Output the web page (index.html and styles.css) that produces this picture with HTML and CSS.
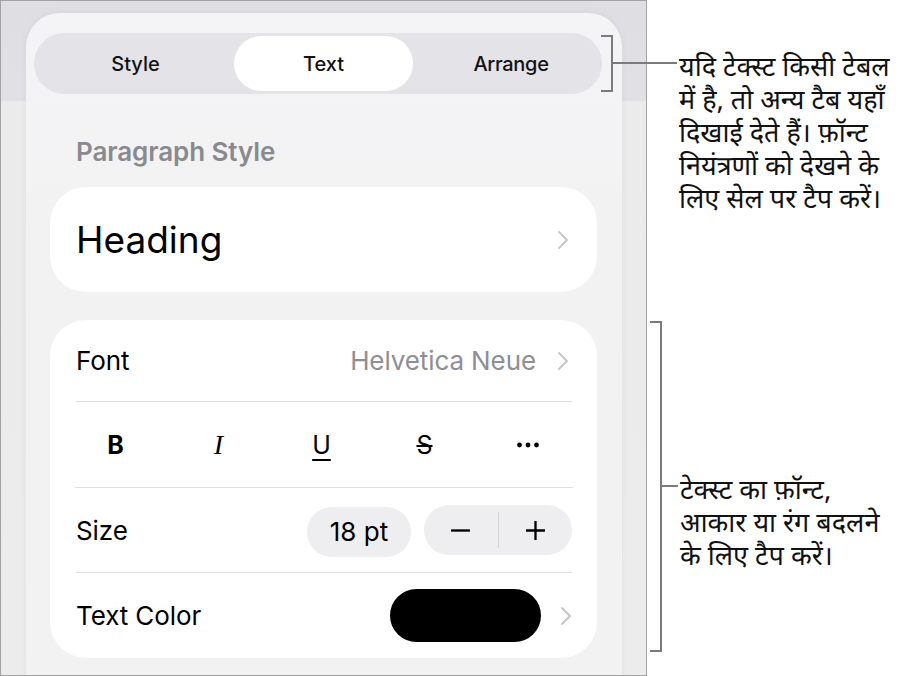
FILE: index.html
```html
<!DOCTYPE html>
<html lang="hi">
<head>
<meta charset="utf-8">
<title>Text format panel</title>
<link rel="stylesheet" href="styles.css">
</head>
<body>
<div class="page">
  <div class="device">
    <div class="panel">
      <div class="segmented">
        <div class="seg">Style</div>
        <div class="seg seg-active">Text</div>
        <div class="seg seg-last">Arrange</div>
      </div>
      <div class="section-label">Paragraph Style</div>
      <div class="card card-heading">
        <span class="heading-text">Heading</span>
        <svg class="chev" viewBox="0 0 12 20"><path d="M2 2 L10 10 L2 18"/></svg>
      </div>
      <div class="card card-font">
        <div class="row row-font">
          <span class="row-label">Font</span>
          <span class="row-value">Helvetica Neue</span>
          <svg class="chev" viewBox="0 0 12 20"><path d="M2 2 L10 10 L2 18"/></svg>
        </div>
        <div class="row row-styles">
          <span class="st st-b">B</span>
          <span class="st st-i">I</span>
          <span class="st st-u">U</span>
          <span class="st st-s">S</span>
          <span class="st st-more"><svg viewBox="0 0 24 6"><circle cx="3.5" cy="3" r="2.4"/><circle cx="12" cy="3" r="2.4"/><circle cx="20.5" cy="3" r="2.4"/></svg></span>
        </div>
        <div class="row row-size">
          <span class="row-label">Size</span>
          <span class="pill-size">18 pt</span>
          <span class="stepper">
            <span class="step"><svg viewBox="0 0 20 20"><path d="M1 10 H19"/></svg></span>
            <span class="step-div"></span>
            <span class="step"><svg viewBox="0 0 20 20"><path d="M1 10 H19 M10 1 V19"/></svg></span>
          </span>
        </div>
        <div class="row row-color">
          <span class="row-label">Text Color</span>
          <span class="swatch"></span>
          <svg class="chev" viewBox="0 0 12 20"><path d="M2 2 L10 10 L2 18"/></svg>
        </div>
      </div>
    </div>
  </div>

  <div class="callout callout-tabs">
    <div class="bracket bracket-tabs"></div>
    <div class="leader leader-tabs"></div>
    <p class="note note-tabs">यदि टेक्स्ट किसी टेबल<br>में है, तो अन्य टैब यहाँ<br>दिखाई देते हैं। फ़ॉन्ट<br>नियंत्रणों को देखने के<br>लिए सेल पर टैप करें।</p>
  </div>

  <div class="callout callout-font">
    <div class="bracket bracket-font"></div>
    <div class="leader leader-font"></div>
    <p class="note note-font">टेक्स्ट का फ़ॉन्ट,<br>आकार या रंग बदलने<br>के लिए टैप करें।</p>
  </div>
</div>
</body>
</html>
```

FILE: styles.css
```css
* { box-sizing: border-box; }
html, body { margin: 0; padding: 0; background: #ffffff; }
body { width: 904px; height: 676px; overflow: hidden; font-family: "Inter", "Liberation Sans", sans-serif; color: #000; }

.page { position: relative; width: 904px; height: 676px; }

.device {
  width: 647px;
  height: 676px;
  border: 1px solid #a2a2a2;
  background: linear-gradient(to bottom, #dfdfe3 0, #e1e1e5 100px, #ebebec 100px, #ececed 100%);
  padding: 12px 0 0 25px;
  overflow: hidden;
}

.panel {
  width: 596px;
  height: 700px;
  border-radius: 34px 34px 0 0;
  background: linear-gradient(to bottom, #f4f4f6 0, #f2f2f3 200px, #f2f2f2 100%);
  box-shadow: 0 0 8px rgba(0,0,0,0.05);
  padding: 20px 24px 0 8px;
}

.segmented {
  width: 568px;
  height: 61px;
  border-radius: 31px;
  background: #e3e3e8;
  padding: 3px;
  display: grid;
  grid-template-columns: 197px 179px 1fr;
}
.seg {
  display: flex;
  align-items: center;
  justify-content: center;
  font-size: 20px;
  font-weight: 500;
  color: #111;
}
.seg-last { padding-left: 10px; letter-spacing: -0.3px; }
.seg-active {
  background: #ffffff;
  border-radius: 28px;
}

.section-label {
  margin: 43px 0 0 42px;
  font-size: 26px;
  line-height: 30px;
  font-weight: 600;
  color: #8a8a8e;
  letter-spacing: -0.1px;
}

.card {
  margin-left: 16px;
  width: 547px;
  background: #ffffff;
  border-radius: 36px;
}

.card-heading {
  margin-top: 20px;
  height: 105px;
  display: flex;
  align-items: center;
  padding: 0 28px 0 26px;
}
.heading-text {
  flex: 1;
  font-size: 37px;
  color: #000;
}

.chev { width: 12px; height: 20px; flex: none; }
.chev path { fill: none; stroke: #c4c4c7; stroke-width: 1.8; stroke-linecap: round; stroke-linejoin: round; }

.card-font {
  margin-top: 28px;
  padding: 0 25px 0 26px;
}

.row {
  display: flex;
  align-items: center;
  border-bottom: 1px solid #dedee0;
}
.row:last-child { border-bottom: none; }

.row-label { flex: 1; font-size: 26px; color: #000; letter-spacing: -0.1px; }
.row-value { font-size: 26px; color: #8e8e93; margin-right: 21px; letter-spacing: -0.1px; }

.row-font { height: 82px; padding-right: 3px; }

.row-styles {
  height: 86px;
  margin-left: -12px;
  margin-right: -10px;
  display: grid;
  grid-template-columns: repeat(5, 103px);
  align-items: center;
  border-bottom: 1px solid #dedee0;
  border-image: linear-gradient(to right, transparent 12px, #dedee0 12px, #dedee0 calc(100% - 10px), transparent calc(100% - 10px)) 1;
}
.st { text-align: center; font-size: 25px; color: #000; line-height: 28px; }
.st-b { font-weight: 700; }
.st-i { font-family: "Liberation Serif", serif; font-style: italic; font-size: 28px; }
.st-u { text-decoration: underline; text-decoration-thickness: 2px; text-underline-offset: 5px; font-weight: 400; }
.st-s { text-decoration: line-through; text-decoration-thickness: 2px; }
.st-more { display: flex; justify-content: center; }
.st-more svg { width: 24px; height: 6px; fill: #000; }

.row-size { height: 85px; }
.pill-size {
  width: 104px;
  height: 50px;
  border-radius: 25px;
  background: #eeeef0;
  display: flex;
  align-items: center;
  justify-content: center;
  font-size: 26px;
  margin-right: 13px;
  margin-top: 3px;
}
.stepper {
  width: 148px;
  height: 50px;
  border-radius: 25px;
  background: #eeeef0;
  display: flex;
  align-items: center;
}
.step { flex: 1; display: flex; justify-content: center; align-items: center; }
.step svg { width: 21px; height: 21px; }
.step path { stroke: #000; stroke-width: 2.2; fill: none; }
.step-div { width: 1px; height: 36px; background: #d6d6d8; }

.row-color { height: 85px; }
.swatch {
  width: 151px;
  height: 53px;
  border-radius: 27px;
  background: #000;
  margin-right: 19px;
}

/* callouts */
.callout {
  position: absolute;
  display: flex;
  align-items: flex-start;
}
.callout-tabs { left: 601px; top: 35px; }
.callout-font { left: 650px; top: 321px; }

.bracket {
  width: 12px;
  border: 2px solid #7b7b7b;
  border-left: none;
}
.bracket-tabs { height: 57px; }
.bracket-font { height: 331px; }

.leader { height: 2px; background: #7b7b7b; }
.leader-tabs { width: 64px; margin-top: 27px; }
.leader-font { width: 16px; margin-top: 164px; }

.note {
  margin: 0 0 0 2px;
  font-family: "Noto Sans Devanagari", "Lohit Devanagari", "Noto Sans", sans-serif;
  font-size: 27px;
  line-height: 33px;
  color: #111;
  white-space: nowrap;
}
.note-tabs { margin-top: 18px; }
.note-font { margin-top: 155px; }
```
